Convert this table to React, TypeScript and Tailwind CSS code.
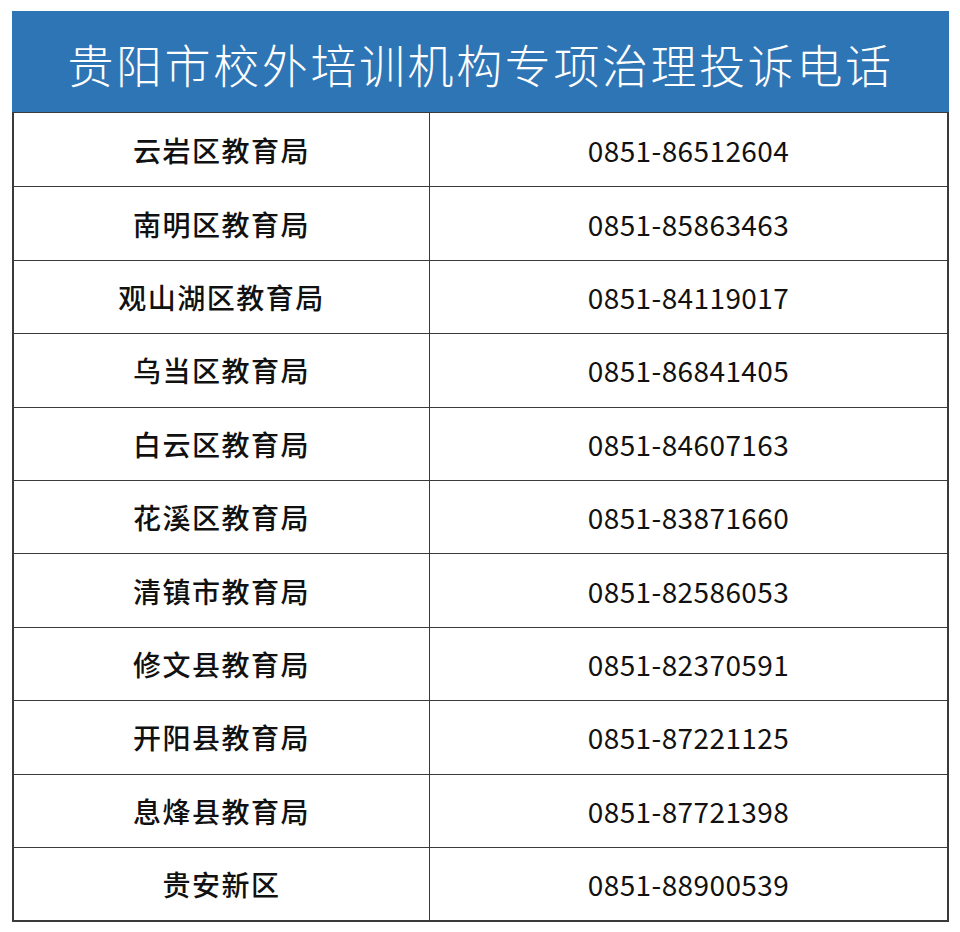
const rows: [string, string][] = [
  ["云岩区教育局", "0851-86512604"],
  ["南明区教育局", "0851-85863463"],
  ["观山湖区教育局", "0851-84119017"],
  ["乌当区教育局", "0851-86841405"],
  ["白云区教育局", "0851-84607163"],
  ["花溪区教育局", "0851-83871660"],
  ["清镇市教育局", "0851-82586053"],
  ["修文县教育局", "0851-82370591"],
  ["开阳县教育局", "0851-87221125"],
  ["息烽县教育局", "0851-87721398"],
  ["贵安新区", "0851-88900539"],
];

export default function App() {
  return (
    <div
      className="w-[960px] h-[932px] bg-white pt-[11px] pl-[12px]"
      style={{ fontFamily: '"Noto Sans CJK SC", "Noto Sans", sans-serif' }}
    >
      <div className="w-[937px]">
        {/* Title bar */}
        <div className="h-[101px] bg-[#2e75b6] flex items-center justify-center">
          <h1 className="text-white text-[46px] font-light leading-none tracking-[2.6px] pt-[2px]">
            贵阳市校外培训机构专项治理投诉电话
          </h1>
        </div>

        {/* Phone list */}
        <div className="border-2 border-t-[1.5px] border-[#3a3a3a]">
          {rows.map(([name, phone], i) => (
            <div
              key={name}
              className={`grid grid-cols-[416px_1fr] h-[73.4px] ${
                i > 0 ? "border-t-[1.5px] border-[#3a3a3a]" : ""
              }`}
            >
              <div className="flex items-center justify-center border-r-[1.5px] border-[#3a3a3a] text-[28px] font-medium text-[#111] tracking-[1.5px]">
                {name}
              </div>
              <div className="flex items-center justify-center text-[28px] font-normal text-[#111] tracking-[0.4px]">
                {phone}
              </div>
            </div>
          ))}
        </div>
      </div>
    </div>
  );
}
